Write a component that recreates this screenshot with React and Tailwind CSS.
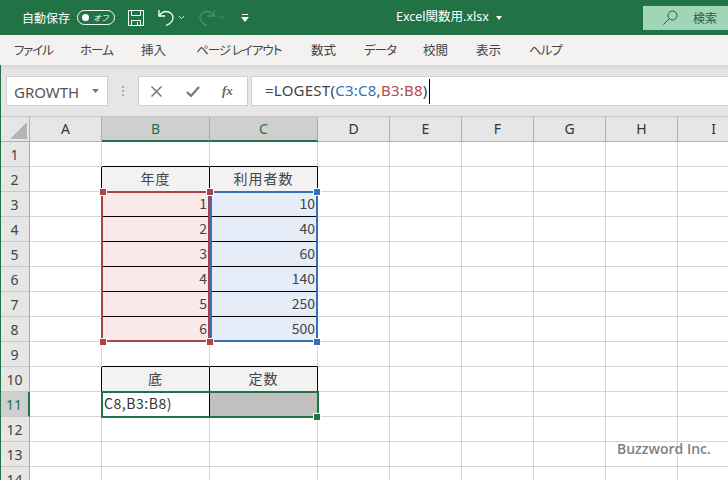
import { ChevronDown } from 'lucide-react'

const JP = "font-['Noto_Sans_CJK_JP',sans-serif]"
const MENU = [
  { label: 'ファイル', slot: 'w-[66px] tracking-[-1.2px]' },
  { label: 'ホーム', slot: 'w-[61px] tracking-[-1px]' },
  { label: '挿入', slot: 'w-[55px]' },
  { label: 'ページ レイアウト', slot: 'w-[115px] tracking-[-1px]' },
  { label: '数式', slot: 'w-[53px]' },
  { label: 'データ', slot: 'w-[59px] tracking-[-1px]' },
  { label: '校閲', slot: 'w-[53px]' },
  { label: '表示', slot: 'w-[53px]' },
  { label: 'ヘルプ', slot: 'w-[40px] tracking-[-1px]' },
]
const COLS = ['A', 'B', 'C', 'D', 'E', 'F', 'G', 'H', 'I']
const ROWS = [1, 2, 3, 4, 5, 6, 7, 8, 9, 10, 11, 12, 13, 14]

const CELLS = {
  B2: { text: '年度', kind: 'head' },
  C2: { text: '利用者数', kind: 'head' },
  B3: { text: '1', kind: 'red' },
  B4: { text: '2', kind: 'red' },
  B5: { text: '3', kind: 'red' },
  B6: { text: '4', kind: 'red' },
  B7: { text: '5', kind: 'red' },
  B8: { text: '6', kind: 'red' },
  C3: { text: '10', kind: 'blue' },
  C4: { text: '40', kind: 'blue' },
  C5: { text: '60', kind: 'blue' },
  C6: { text: '140', kind: 'blue' },
  C7: { text: '250', kind: 'blue' },
  C8: { text: '500', kind: 'blue' },
  B10: { text: '底', kind: 'head' },
  C10: { text: '定数', kind: 'head' },
  B11: { text: 'C8,B3:B8)', kind: 'edit' },
  C11: { text: '', kind: 'gray' },
}

const KIND_CLASS = {
  head: 'bg-[#f2f2f2] justify-center text-[#444] tracking-[1px] pb-[1px]',
  red: 'bg-[#f9e9e9] justify-end pr-[2px] text-[#444] pb-[2px]',
  blue: 'bg-[#e6edf8] justify-end pr-[2px] text-[#444] pb-[2px]',
  edit: 'bg-white justify-start pl-[2px] text-[#333] tracking-[0.55px] pb-[2px]',
  gray: 'bg-[#c0c0c0]',
  none: 'bg-white',
}

// black ruling of the two small tables, everything else is the light grid
function hasBlackBottom(col, row) {
  if (col !== 'B' && col !== 'C') return false
  return (row >= 1 && row <= 8) || row === 9 || row === 10
}

function hasBlackRight(col, row) {
  const inTable = (row >= 2 && row <= 8) || row === 10 || row === 11
  return inTable && (col === 'A' || col === 'B' || col === 'C')
}

function Cell({ col, row }) {
  const cell = CELLS[col + row]
  const kind = cell ? cell.kind : 'none'
  return (
    <div
      className={`flex items-center border-r border-b text-[14px] ${JP} ${KIND_CLASS[kind]} ${
        hasBlackRight(col, row) ? 'border-r-black' : 'border-r-[#d4d4d4]'
      } ${hasBlackBottom(col, row) ? 'border-b-black' : 'border-b-[#d4d4d4]'}`}
    >
      {cell && cell.text}
    </div>
  )
}

function Handle({ className }) {
  return <div className={`absolute w-[6px] h-[6px] border border-white box-content ${className}`} />
}

function TitleBar() {
  return (
    <div className={`h-[35px] bg-[#217346] flex items-center text-white text-[12px] ${JP}`}>
      <span className="ml-[22px] w-[48px] whitespace-nowrap">自動保存</span>
      <div className="ml-[7px] w-[38px] h-[15px] rounded-full border border-white flex items-center justify-between pl-[4px] pr-[5px]">
        <div className="w-[7px] h-[7px] rounded-full bg-white" />
        <span className="text-[8px] italic leading-none">オフ</span>
      </div>
      <svg className="ml-[13px]" width="16" height="16" viewBox="0 0 16 16" fill="none" stroke="#fff" strokeWidth="1">
        <path d="M.5.5h15v15H.5z" />
        <path d="M3.500.5v5h9v-5M3.500 15.500v-5h9v5M9.500 12v3" />
      </svg>
      <svg className="ml-[14px]" width="17" height="18" viewBox="0 0 17 18" fill="none" stroke="#fff" strokeWidth="1.300">
        <path d="M1 1v6h6" />
        <path d="M1 7c2-3 4-4.500 7-4.500 4 0 7 2.500 7 6 0 3-2 6-7 8" />
      </svg>
      <ChevronDown className="ml-[2px]" size={9} strokeWidth={2.5} color="#fff" />
      <svg className="ml-[12px]" width="17" height="18" viewBox="0 0 17 18" fill="none" stroke="#4d9070" strokeWidth="1.300">
        <path d="M16 1v6h-6" />
        <path d="M16 7c-2-3-4-4.500-7-4.500-4 0-7 2.500-7 6 0 3 2 6 7 8" />
      </svg>
      <ChevronDown className="ml-[2px]" size={9} strokeWidth={2.5} color="#4d9070" />
      <svg className="ml-[15px]" width="8" height="8" viewBox="0 0 8 8" fill="#fff">
        <path d="M1 0h6v1H1zM0 3h8L4 8z" />
      </svg>
      <span className="ml-[147px] w-[94px] whitespace-nowrap text-[12.500px] font-['Noto_Sans','Noto_Sans_CJK_JP',sans-serif]">Excel関数用.xlsx</span>
      <svg className="ml-[6px]" width="6" height="4" viewBox="0 0 6 4" fill="#fff">
        <path d="M0 0h6L3 4z" />
      </svg>
      <div className="ml-auto w-[85px] h-[24px] bg-[#a0d5b8] flex items-center text-[#2f5a44]">
        <svg className="ml-[20px]" width="15" height="15" viewBox="0 0 15 15" fill="none" stroke="#2f5a44" strokeWidth="1">
          <circle cx="9.500" cy="5.500" r="4.500" />
          <path d="M6 9l-5.500 5.500" />
        </svg>
        <span className="ml-[15px]">検索</span>
      </div>
    </div>
  )
}

function MenuBar() {
  return (
    <div className={`h-[30px] bg-[#f3f2f1] flex items-center pl-[14px] text-[12.500px] text-[#444] [font-feature-settings:'palt'] ${JP}`}>
      {MENU.map((item) => (
        <span key={item.label} className={`whitespace-nowrap ${item.slot}`}>{item.label}</span>
      ))}
    </div>
  )
}

function FormulaBar() {
  return (
    <div className="h-[52px] pt-[11px] pl-[6px] border-b border-b-[#c8c8c8] bg-gradient-to-b from-[#d9d9d9] to-[#e6e6e6] to-[6px] flex items-start">
      <div className="w-[102px] h-[30px] bg-white border border-[#d0d0d0] flex items-center justify-between pl-[7px] pr-[8px]">
        <span className="font-['Noto_Sans',sans-serif] text-[15px] text-[#555] pt-[2px]">GROWTH</span>
        <svg width="7" height="4" viewBox="0 0 7 4" fill="#777"><path d="M0 0h7L3.500 4z" /></svg>
      </div>
      <div className="w-[30px] h-[30px] flex flex-col items-center justify-center gap-[2px] shrink-0">
        <i className="w-[2px] h-[2px] bg-[#aaa]" />
        <i className="w-[2px] h-[2px] bg-[#aaa]" />
        <i className="w-[2px] h-[2px] bg-[#aaa]" />
      </div>
      <div className="w-[110px] h-[30px] bg-white border border-[#d0d0d0] flex items-center text-[#777]">
        <svg className="ml-[12px]" width="11" height="11" viewBox="0 0 11 11" stroke="#777" strokeWidth="1.500">
          <path d="M.5.5l10 10M10.500.5l-10 10" />
        </svg>
        <svg className="ml-[24px]" width="14" height="11" viewBox="0 0 14 11" fill="none" stroke="#777" strokeWidth="2.200">
          <path d="M1 6l4 4 8-9" />
        </svg>
        <span className="ml-[22px] font-['Liberation_Serif',serif] italic font-bold text-[13px] text-[#666]">fx</span>
      </div>
      <div className="ml-[3px] flex-1 h-[30px] bg-white border-y border-l border-[#d0d0d0] flex items-center pl-[13px] font-['Noto_Sans',sans-serif] text-[15px] tracking-[0.25px] text-[#444]">
        <span className="pb-[1px]">=LOGEST(</span>
        <span className="pb-[1px] text-[#3a6fb5]">C3:C8</span>
        <span className="pb-[1px]">,</span>
        <span className="pb-[1px] text-[#b24a50]">B3:B8</span>
        <span className="pb-[1px]">)</span>
        <span className="ml-px w-px h-[25px] bg-black" />
      </div>
    </div>
  )
}

function Sheet() {
  return (
    <div className="relative overflow-hidden">
      <div className="grid grid-cols-[30px_72px_108px_108px_72px_72px_72px_72px_72px_72px] auto-rows-[25px]">
        <div className="bg-[#e6e6e6] border-r border-b border-[#b0b0b0] flex items-end justify-end p-[2px]">
          <div className="w-0 h-0 border-l-[17px] border-l-transparent border-b-[17px] border-b-[#b4b4b4]" />
        </div>
        {COLS.map((col) => {
          const active = col === 'B' || col === 'C'
          return (
            <div
              key={col}
              className={`flex items-center justify-center font-['Noto_Sans',sans-serif] text-[14px] pb-[1px] border-r ${
                active
                  ? 'bg-[#cfcfcf] text-[#217346] border-b-2 border-b-[#217346] border-r-[#a8a8a8]'
                  : 'bg-[#e6e6e6] text-[#333] border-b border-b-[#b0b0b0] border-r-[#b0b0b0]'
              }`}
            >
              {col}
            </div>
          )
        })}
        {ROWS.map((row) => (
          <div key={row} className="contents">
            <div
              className={`flex items-center justify-center font-['Noto_Sans',sans-serif] text-[14px] border-r border-b border-b-[#c8c8c8] ${
                row === 11
                  ? 'bg-[#cfcfcf] text-[#217346] border-r-2 border-r-[#217346]'
                  : 'bg-[#e6e6e6] text-[#444] border-r-[#a8a8a8]'
              }`}
            >
              {row}
            </div>
            {COLS.map((col) => (
              <Cell key={col} col={col} row={row} />
            ))}
          </div>
        ))}
      </div>

      {/* formula range highlights */}
      <div className="absolute left-[101px] top-[74px] w-[109px] h-[151px] border-2 border-[#a94449]" />
      <div className="absolute left-[210px] top-[74px] w-[108px] h-[151px] border-2 border-[#3a6fb5]" />
      <Handle className="left-[99px] top-[71px] bg-[#a94449]" />
      <Handle className="left-[206px] top-[71px] bg-[#a94449]" />
      <Handle className="left-[313px] top-[71px] bg-[#3a6fb5]" />
      <Handle className="left-[99px] top-[221px] bg-[#a94449]" />
      <Handle className="left-[206px] top-[221px] bg-[#a94449]" />
      <Handle className="left-[313px] top-[221px] bg-[#3a6fb5]" />

      {/* current selection */}
      <div className="absolute left-[101px] top-[274px] w-[218px] h-[27px] border-2 border-[#217346]" />
      <Handle className="left-[313px] top-[296px] bg-[#217346]" />

      <div className="absolute left-[617px] top-[321px] font-['Open_Sans',sans-serif] font-semibold text-[14px] text-[#7f7f7f]">
        Buzzword Inc.
      </div>
    </div>
  )
}

export default function App() {
  return (
    <div className="relative w-[728px] h-[480px] overflow-hidden bg-white">
      <TitleBar />
      <MenuBar />
      <FormulaBar />
      <Sheet />
      <div className="absolute left-0 top-[65px] bottom-0 w-px bg-[#217346]" />
    </div>
  )
}
